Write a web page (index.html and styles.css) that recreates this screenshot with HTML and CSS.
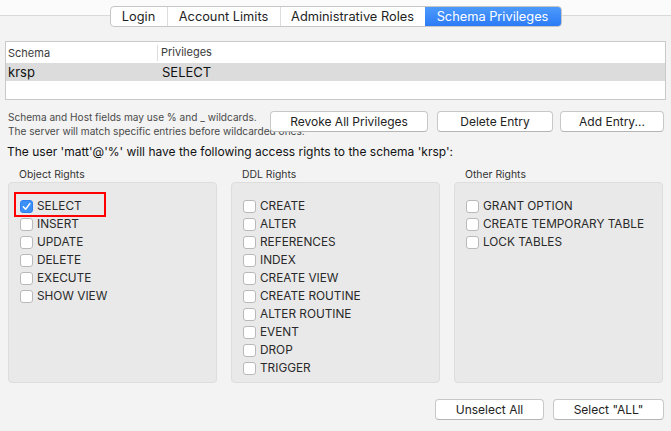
FILE: index.html
```html
<!DOCTYPE html>
<html>
<head>
<meta charset="utf-8">
<link rel="stylesheet" href="styles.css">
</head>
<body>
<div class="topbar">
  <div class="tabs">
    <div class="tab t-login">Login</div>
    <div class="tab t-limits">Account Limits</div>
    <div class="tab t-admin">Administrative Roles</div>
    <div class="tab t-schema active">Schema Privileges</div>
  </div>
</div>

<div class="table">
  <div class="thead">
    <div class="c1">Schema</div>
    <div class="c2">Privileges</div>
  </div>
  <div class="trow">
    <div class="c1">krsp</div>
    <div class="c2">SELECT</div>
  </div>
</div>

<div class="actions">
  <div class="note">Schema and Host fields may use % and _ wildcards.<br>The server will match specific entries before wildcarded ones.</div>
  <button class="btn b-revoke">Revoke All Privileges</button>
  <button class="btn b-delete">Delete Entry</button>
  <button class="btn b-add">Add Entry...</button>
</div>

<div class="heading">The user 'matt'@'%' will have the following access rights to the schema 'krsp':</div>

<div class="groups">
  <div class="group">
    <div class="glabel">Object Rights</div>
    <div class="gbox">
      <div class="highlight"></div>
      <label class="cb"><span class="box checked"><svg viewBox="0 0 13 13" width="13" height="13"><path d="M3.3 6.8 L5.6 9.2 L9.9 3.6" fill="none" stroke="#fff" stroke-width="1.5" stroke-linecap="round" stroke-linejoin="round"/></svg></span>SELECT</label>
      <label class="cb"><span class="box"></span>INSERT</label>
      <label class="cb"><span class="box"></span>UPDATE</label>
      <label class="cb"><span class="box"></span>DELETE</label>
      <label class="cb"><span class="box"></span>EXECUTE</label>
      <label class="cb"><span class="box"></span>SHOW VIEW</label>
    </div>
  </div>
  <div class="group">
    <div class="glabel">DDL Rights</div>
    <div class="gbox">
      <label class="cb"><span class="box"></span>CREATE</label>
      <label class="cb"><span class="box"></span>ALTER</label>
      <label class="cb"><span class="box"></span>REFERENCES</label>
      <label class="cb"><span class="box"></span>INDEX</label>
      <label class="cb"><span class="box"></span>CREATE VIEW</label>
      <label class="cb"><span class="box"></span>CREATE ROUTINE</label>
      <label class="cb"><span class="box"></span>ALTER ROUTINE</label>
      <label class="cb"><span class="box"></span>EVENT</label>
      <label class="cb"><span class="box"></span>DROP</label>
      <label class="cb"><span class="box"></span>TRIGGER</label>
    </div>
  </div>
  <div class="group">
    <div class="glabel">Other Rights</div>
    <div class="gbox">
      <label class="cb"><span class="box"></span>GRANT OPTION</label>
      <label class="cb"><span class="box"></span>CREATE TEMPORARY TABLE</label>
      <label class="cb"><span class="box"></span>LOCK TABLES</label>
    </div>
  </div>
</div>

<div class="bottom">
  <button class="btn b-unsel">Unselect All</button>
  <button class="btn b-selall">Select "ALL"</button>
</div>
</body>
</html>
```

FILE: styles.css
```css
* { box-sizing: border-box; }
html, body { margin: 0; padding: 0; }
body {
  width: 671px;
  height: 431px;
  overflow: hidden;
  background: #f3f3f3;
  font-family: "Inter", "Roboto", "Liberation Sans", sans-serif;
  color: #222;
}
.topbar {
  height: 41px;
  padding-top: 6px;
  background: linear-gradient(#fbfbfb 0, #fbfbfb 15px, #d9d9d9 15px, #d9d9d9 16px, #f3f3f3 16px);
  display: flex;
  justify-content: center;
  align-items: flex-start;
}
.tabs {
  display: flex;
  height: 21px;
  border: 1px solid #c6c6c6;
  border-radius: 4px;
  background: #fff;
  overflow: hidden;
}
.tab {
  font-size: 12.8px;
  line-height: 19px;
  text-align: center;
  color: #1e1e1e;
  border-left: 1px solid #dcdcdc;
}
.tab:first-child { border-left: none; }
.t-login { width: 56px; }
.t-limits { width: 113px; }
.t-admin { width: 145px; }
.t-schema { width: 136px; }
.tab.active {
  background: linear-gradient(#4d9afc, #2c7bf6);
  color: #fff;
  border-left: none;
}

.table {
  margin: 0 5px;
  height: 59px;
  border: 1px solid #c9c9c9;
  background: #fff;
}
.thead, .trow { display: flex; }
.thead {
  height: 21px;
  font-size: 11px;
  color: #3a3a3a;
}
.thead .c1 { width: 152px; padding-left: 2px; border-right: 1px solid #dcdcdc; margin: 3px 0 2px; line-height: 16px; }
.thead .c2 { padding-left: 3px; line-height: 21px; }
.trow {
  height: 18px;
  background: #dcdcdc;
  font-size: 13px;
  line-height: 18px;
  color: #111;
}
.trow .c1 { width: 153px; padding-left: 2px; }
.trow .c2 { padding-left: 3px; }

.actions {
  display: flex;
  align-items: flex-start;
  margin-top: 10px;
  height: 30px;
}
.note {
  width: 270px;
  flex: none;
  padding-left: 8px;
  font-size: 10.1px;
  line-height: 14px;
  color: #4a4a4a;
  white-space: nowrap;
}
.btn {
  font-family: inherit;
  font-size: 12px;
  color: #222;
  background: #fff;
  border: 1px solid #c8c8c8;
  border-bottom-color: #b5b5b5;
  border-radius: 4px;
  height: 21px;
  padding: 0;
  line-height: 19px;
  flex: none;
  margin-top: 1px;
}
.b-revoke { width: 158px; }
.b-delete { width: 116px; margin-left: 9px; }
.b-add { width: 104px; margin-left: 7px; }

.heading {
  margin-top: 4px;
  padding-left: 7px;
  font-size: 12px;
  line-height: 16px;
  color: #111;
}

.groups {
  display: grid;
  grid-template-columns: 209px 209px 209px;
  column-gap: 14px;
  margin: 7px 0 0 8px;
}
.glabel {
  font-size: 10.4px;
  line-height: 15px;
  color: #333;
  padding-left: 11px;
  height: 15px;
}
.gbox {
  position: relative;
  height: 201px;
  background: #e9e9e9;
  border: 1px solid #dddddd;
  border-radius: 4px;
  padding: 14px 0 0 11px;
}
.cb {
  display: flex;
  align-items: center;
  height: 18px;
  font-size: 11.8px;
  color: #2a2a2a;
}
.box {
  width: 13px;
  height: 13px;
  border: 1px solid #b9b9b9;
  border-radius: 3px;
  background: #fff;
  margin-right: 4px;
  flex: none;
  display: flex;
}
.box.checked {
  background: #3b8ff9;
  border-color: #2f7ef0;
}
.box svg { margin: -1px; }
.highlight {
  position: absolute;
  left: 5px;
  top: 9px;
  width: 92px;
  height: 25px;
  border: 2.5px solid #f00;
}

.bottom {
  display: flex;
  justify-content: flex-end;
  margin-top: 15px;
  padding-right: 7px;
}
.b-unsel { width: 109px; }
.b-selall { width: 111px; margin-left: 9px; }
```
